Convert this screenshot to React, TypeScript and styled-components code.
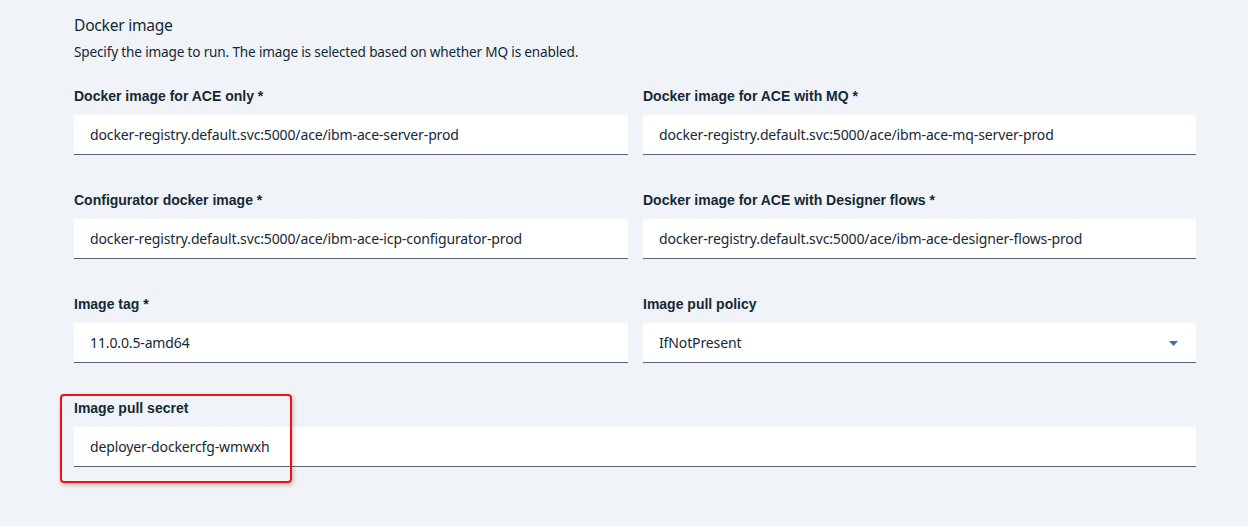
import React from "react";
import styled, { createGlobalStyle } from "styled-components";

const Global = createGlobalStyle`
  html, body { margin: 0; padding: 0; background: #f0f3f8; }
  body { font-family: "Noto Sans", "Liberation Sans", sans-serif; color: #152935; }
  * { box-sizing: border-box; }
`;

const Page = styled.div`
  position: relative;
  width: 1248px;
  height: 526px;
  padding: 14px 52px 0 74px;
  background: #f0f3f8;
`;

const Title = styled.h2`
  margin: 0;
  font-size: 15.6px;
  letter-spacing: -0.25px;
  font-weight: 400;
  line-height: 22px;
  color: #152935;
`;

const Description = styled.p`
  margin: 7px 0 0;
  font-size: 13.6px;
  letter-spacing: -0.17px;
  line-height: 18px;
  color: #152935;
`;

const Grid = styled.div`
  display: grid;
  grid-template-columns: 554px 553px;
  column-gap: 15px;
  row-gap: 37px;
  margin-top: 27px;
`;

const Field = styled.div<{ $wide?: boolean }>`
  display: flex;
  flex-direction: column;
  grid-column: ${(p) => (p.$wide ? "1 / span 2" : "auto")};
`;

const Label = styled.label`
  font-family: "Liberation Sans", Arial, sans-serif;
  font-weight: 700;
  font-size: 14px;
  line-height: 16px;
  color: #152935;
  margin-bottom: 11px;
`;

const Input = styled.div`
  position: relative;
  height: 40px;
  background: #ffffff;
  border-bottom: 1px solid #5a6872;
  display: flex;
  align-items: center;
  padding: 0 16px;
  font-size: 14px;
  letter-spacing: -0.13px;
  color: #152935;
`;

const Caret = styled.svg`
  margin-left: auto;
  margin-right: 2px;
  margin-top: 2px;
`;

const Highlight = styled.div`
  position: absolute;
  left: 60px;
  top: 394px;
  width: 232px;
  height: 89px;
  border: 2px solid #f00e0e;
  border-radius: 4px;
  box-shadow: 1px 2px 4px rgba(0, 0, 0, 0.25);
  pointer-events: none;
`;

type F = { label: string; value: string; select?: boolean; wide?: boolean };

const fields: F[] = [
  { label: "Docker image for ACE only *", value: "docker-registry.default.svc:5000/ace/ibm-ace-server-prod" },
  { label: "Docker image for ACE with MQ *", value: "docker-registry.default.svc:5000/ace/ibm-ace-mq-server-prod" },
  { label: "Configurator docker image *", value: "docker-registry.default.svc:5000/ace/ibm-ace-icp-configurator-prod" },
  { label: "Docker image for ACE with Designer flows *", value: "docker-registry.default.svc:5000/ace/ibm-ace-designer-flows-prod" },
  { label: "Image tag *", value: "11.0.0.5-amd64" },
  { label: "Image pull policy", value: "IfNotPresent", select: true },
  { label: "Image pull secret", value: "deployer-dockercfg-wmwxh", wide: true },
];

export default function App() {
  return (
    <>
      <Global />
      <Page>
        <Title>Docker image</Title>
        <Description>Specify the image to run. The image is selected based on whether MQ is enabled.</Description>
        <Grid>
          {fields.map((f) => (
            <Field key={f.label} $wide={f.wide}>
              <Label>{f.label}</Label>
              <Input>
                {f.value}
                {f.select && (
                  <Caret width="9" height="5" viewBox="0 0 9 5">
                    <polygon points="0,0 9,0 4.5,5" fill="#3d70b2" />
                  </Caret>
                )}
              </Input>
            </Field>
          ))}
        </Grid>
        <Highlight />
      </Page>
    </>
  );
}
